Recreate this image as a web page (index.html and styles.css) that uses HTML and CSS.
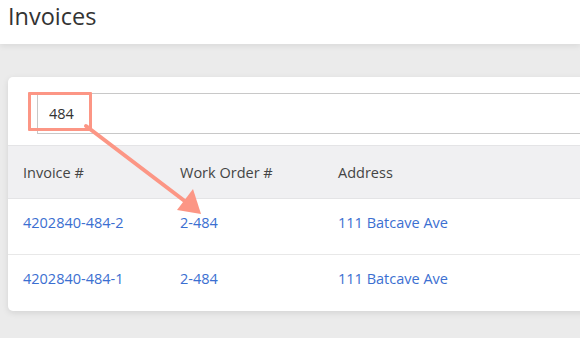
FILE: index.html
```html
<!DOCTYPE html>
<html lang="en">
<head>
  <meta charset="UTF-8">
  <title>Invoices</title>
  <link rel="stylesheet" href="styles.css">
</head>
<body>
  <div class="page-header">
    <h1>Invoices</h1>
  </div>

  <div class="content">
    <div class="card">
      <div class="search-row">
        <input type="text" class="search-input" value="484">
      </div>

      <table class="invoice-table">
        <thead>
          <tr>
            <th class="col-invoice">Invoice #</th>
            <th class="col-order">Work Order #</th>
            <th>Address</th>
          </tr>
        </thead>
        <tbody>
          <tr>
            <td><a href="#">4202840-484-2</a></td>
            <td><a href="#">2-484</a></td>
            <td><a href="#">111 Batcave Ave</a></td>
          </tr>
          <tr>
            <td><a href="#">4202840-484-1</a></td>
            <td><a href="#">2-484</a></td>
            <td><a href="#">111 Batcave Ave</a></td>
          </tr>
        </tbody>
      </table>
    </div>
  </div>

  <!-- annotation overlay -->
  <div class="highlight-box"></div>
  <svg class="arrow" width="580" height="338" viewBox="0 0 580 338">
    <line x1="86" y1="126" x2="186" y2="202" stroke="#fc9685" stroke-width="4" stroke-linecap="round"/>
    <polygon points="201,214 177,210 193,189" fill="#fc9685"/>
  </svg>
</body>
</html>
```

FILE: styles.css
```css
body {
  margin: 0;
  padding: 0;
  font-family: "Open Sans", Arial, sans-serif;
  background-color: #ebebeb;
  width: 580px;
  height: 338px;
  overflow: hidden;
  position: relative;
}
.page-header {
  background-color: white;
  height: 44px;
  box-shadow: 0 2px 6px rgba(0, 0, 0, 0.08);
  padding: 0 8px;
  position: relative;
}
.page-header h1 {
  margin: 0;
  font-weight: 400;
  font-size: 23.5px;
  line-height: 32px;
  color: #333;
}
.content {
  padding: 33px 0 0 8px;
}
.card {
  background-color: white;
  border-radius: 5px 0 0 5px;
  box-shadow: 0 2px 6px rgba(0, 0, 0, 0.1);
  padding-top: 16px;
  width: 600px;
}
.search-row {
  padding: 0 0 11px 29px;
}
.search-input {
  display: block;
  width: 100%;
  height: 41px;
  box-sizing: border-box;
  border: 1px solid #c8c8c8;
  border-right: none;
  padding: 0 11px;
  font-family: inherit;
  font-size: 14.5px;
  color: #333;
  outline: none;
}
.invoice-table {
  width: 100%;
  border-collapse: collapse;
  font-size: 14.5px;
}
.invoice-table th {
  background-color: #f0f0f2;
  font-weight: 400;
  color: #444;
  text-align: left;
  height: 52px;
  padding: 0 15px;
  border-top: 1px solid #e4e4e6;
  border-bottom: 1px solid #e4e4e6;
}
.invoice-table .col-invoice {
  width: 127px;
}
.invoice-table .col-order {
  width: 128px;
}
.invoice-table td {
  height: 56px;
  padding: 0 15px 9px;
  vertical-align: middle;
  box-sizing: border-box;
  border-bottom: 1px solid #e8e8e8;
}
.invoice-table tbody tr:last-child td {
  border-bottom: none;
}
.invoice-table a {
  color: #3b6fd1;
  text-decoration: none;
}
.highlight-box {
  position: absolute;
  left: 28px;
  top: 92px;
  width: 58px;
  height: 33px;
  border: 3px solid #fc9685;
  border-radius: 1px;
}
.arrow {
  position: absolute;
  left: 0;
  top: 0;
}
```
